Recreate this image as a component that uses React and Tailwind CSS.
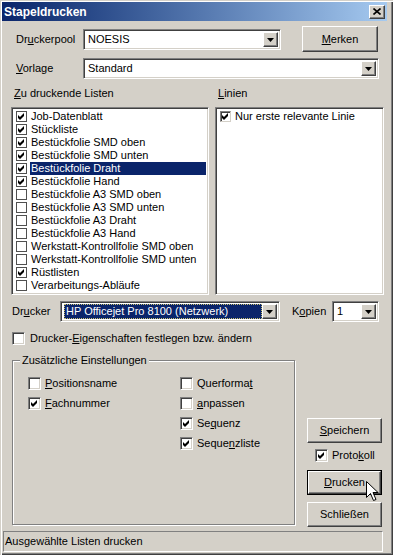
import React from 'react';

// Win2k classic dialog, 3D edges via border + inset shadows
const raised = 'bg-[#d4d0c8] border border-t-white border-l-white border-r-[#404040] border-b-[#404040] shadow-[inset_-1px_-1px_#808080]';
const sunken = 'border border-t-[#808080] border-l-[#808080] border-r-white border-b-white shadow-[inset_1px_1px_#404040,inset_-1px_-1px_#d4d0c8]';

const Tick = ({ className = '' }) => (
  <svg width="7" height="7" viewBox="0 0 7 7" className={className}>
    <path d="M0 2 L2 4 L6 0 L6 3 L2 7 L0 5 Z" fill="#000" />
  </svg>
);

const Arrow = () => (
  <svg width="7" height="4" viewBox="0 0 7 4">
    <path d="M0 0 H7 L3.5 4 Z" fill="#000" />
  </svg>
);

const Check3D = ({ checked }) => (
  <div className={`w-[13px] h-[13px] shrink-0 bg-white flex items-center justify-center ${sunken}`}>
    {checked && <Tick />}
  </div>
);

const ListCheck = ({ checked }) => (
  <div className="w-[11px] h-[11px] shrink-0 bg-white border border-[#505050] flex items-center justify-center">
    {checked && <Tick />}
  </div>
);

const Combo = ({ className = '', children }) => (
  <div className={`h-[21px] bg-white flex p-[2px] ${sunken} ${className}`}>
    <div className="flex-1 flex items-center min-w-0">{children}</div>
    <div className={`w-[15px] shrink-0 flex items-center justify-center ${raised}`}>
      <Arrow />
    </div>
  </div>
);

const Button = ({ className = '', children, isDefault }) => (
  <div className={`h-[25px] w-[75px] ${isDefault ? 'border border-black' : ''} ${className}`}>
    <div className={`w-full h-full flex items-center justify-center ${raised}`}>{children}</div>
  </div>
);

const listen = [
  ['Job-Datenblatt', true],
  ['Stückliste', true],
  ['Bestückfolie SMD oben', true],
  ['Bestückfolie SMD unten', true],
  ['Bestückfolie Draht', true],
  ['Bestückfolie Hand', true],
  ['Bestückfolie A3 SMD oben', false],
  ['Bestückfolie A3 SMD unten', false],
  ['Bestückfolie A3 Draht', false],
  ['Bestückfolie A3 Hand', false],
  ['Werkstatt-Kontrollfolie SMD oben', false],
  ['Werkstatt-Kontrollfolie SMD unten', false],
  ['Rüstlisten', true],
  ['Verarbeitungs-Abläufe', false],
];

const Opt = ({ checked, children }) => (
  <div className="flex items-center h-[13px]">
    <Check3D checked={checked} />
    <span className="ml-[4px] leading-[13px]">{children}</span>
  </div>
);

export default function App() {
  return (
    <div className="relative w-[393px] h-[555px] bg-[#d4d0c8] flex flex-col text-[11px] text-black font-['Liberation_Sans',Arial,sans-serif] overflow-hidden shadow-[inset_1px_1px_#d4d0c8,inset_2px_2px_#fff,inset_-1px_-1px_#404040,inset_-2px_-2px_#808080,inset_-3px_-3px_#d4d0c8]">
      {/* Title bar */}
      <div className="ml-[2px] mt-[2px] w-[385px] h-[19px] shrink-0 flex items-center bg-gradient-to-r from-[#0a246a] to-[#a6caf0]">
        <span className="ml-[2px] text-white font-bold text-[12px]">Stapeldrucken</span>
        <div className={`ml-auto mr-[2px] w-[16px] h-[14px] flex items-center justify-center ${raised}`}>
          <svg width="8" height="7" viewBox="0 0 8 7">
            <path d="M0.5 0.5 L7.5 6.5 M7.5 0.5 L0.5 6.5" stroke="#000" strokeWidth="1.6" />
          </svg>
        </div>
      </div>

      {/* Druckerpool */}
      <div className="flex mt-[5px] h-[26px] shrink-0">
        <span className="ml-[16px] w-[67px] self-center">Dr<u>u</u>ckerpool</span>
        <Combo className="mt-[3px] w-[198px]">
          <span className="ml-[2px]">NOESIS</span>
        </Combo>
        <Button className="ml-[21px] !w-[76px] !h-[26px]"><span><u>M</u>erken</span></Button>
      </div>

      {/* Vorlage */}
      <div className="flex mt-[6px] h-[21px] shrink-0 items-center">
        <span className="ml-[16px] w-[67px]"><u>V</u>orlage</span>
        <Combo className="w-[296px]">
          <span className="ml-[2px]">Standard</span>
        </Combo>
      </div>

      {/* List labels */}
      <div className="flex mt-[7px] h-[14px] shrink-0 items-center">
        <span className="ml-[14px] w-[204px]"><u>Z</u>u druckende Listen</span>
        <span><u>L</u>inien</span>
      </div>

      {/* Lists */}
      <div className="flex mt-[7px] h-[188px] shrink-0">
        <div className={`ml-[11px] w-[198px] bg-white p-[2px] ${sunken}`}>
          {listen.map(([name, checked], i) => (
            <div key={name} className="flex items-center h-[13px]">
              <div className="ml-[2px]"><ListCheck checked={checked} /></div>
              <span
                className={`ml-[3px] pl-[1px] flex-1 leading-[13px] ${i === 4 ? 'bg-[#0a246a] text-white' : ''}`}
              >
                {name}
              </span>
            </div>
          ))}
        </div>
        <div className={`ml-[6px] w-[169px] bg-white p-[2px] ${sunken}`}>
          <div className="flex items-center h-[13px]">
            <div className="ml-[2px] w-[11px] h-[11px] bg-white flex items-center justify-center border border-t-[#808080] border-l-[#808080] border-r-[#d4d0c8] border-b-[#d4d0c8] shadow-[inset_1px_1px_#404040]">
              <Tick />
            </div>
            <span className="ml-[4px] leading-[13px]">Nur erste relevante Linie</span>
          </div>
        </div>
      </div>

      {/* Drucker */}
      <div className="flex mt-[6px] h-[21px] shrink-0 items-center">
        <span className="ml-[12px] w-[48px]">Dr<u>u</u>cker</span>
        <Combo className="w-[220px]">
          <span className="ml-[1px] h-[15px] pl-[1px] pr-[2px] bg-[#0a246a] text-white border border-dotted border-[#c8c070] leading-[13px] flex-1 whitespace-nowrap">
            HP Officejet Pro 8100 (Netzwerk)
          </span>
        </Combo>
        <span className="ml-[12px] w-[40px]">K<u>o</u>pien</span>
        <Combo className="w-[47px]">
          <span className="ml-[2px]">1</span>
        </Combo>
      </div>

      {/* Eigenschaften */}
      <div className="flex mt-[10px] h-[13px] shrink-0 items-center">
        <div className="ml-[12px]"><Check3D /></div>
        <span className="ml-[5px]">Drucker-<u>E</u>igenschaften festlegen bzw. ändern</span>
      </div>

      {/* Group + buttons */}
      <div className="flex mt-[15px] h-[167px] shrink-0">
        <div className="relative ml-[12px] w-[283px] h-[165px] border border-[#808080] shadow-[inset_1px_1px_#fff,1px_1px_#fff] flex">
          <span className="absolute left-[7px] -top-[8px] px-[2px] bg-[#d4d0c8] leading-[14px]">Zusätzliche Einstellungen</span>
          <div className="pl-[15px] pt-[16px] w-[167px] flex flex-col gap-[7px]">
            <Opt><u>P</u>ositionsname</Opt>
            <Opt checked><u>F</u>achnummer</Opt>
          </div>
          <div className="pt-[16px] flex flex-col gap-[7px]">
            <Opt>Querforma<u>t</u></Opt>
            <Opt><u>a</u>npassen</Opt>
            <Opt checked>Se<u>q</u>uenz</Opt>
            <Opt checked>Seque<u>n</u>zliste</Opt>
          </div>
        </div>
        <div className="ml-[12px] w-[75px] pt-[58px] flex flex-col">
          <Button><span><u>S</u>peichern</span></Button>
          <div className="flex items-center mt-[6px] h-[13px] ml-[8px]">
            <Check3D checked />
            <span className="ml-[4px]">Proto<u>k</u>oll</span>
          </div>
          <Button className="mt-[8px]" isDefault><span><u>D</u>rucken</span></Button>
          <Button className="mt-[7px]"><span>Schließen</span></Button>
        </div>
      </div>

      {/* Status bar */}
      <div className="ml-[3px] mt-[4px] w-[380px] h-[21px] shrink-0 flex items-center border border-t-[#808080] border-l-[#808080] border-r-white border-b-white">
        <span className="ml-[1px]">Ausgewählte Listen drucken</span>
      </div>

      {/* mouse pointer */}
      <svg className="absolute left-[366px] top-[481px]" width="13" height="21" viewBox="0 0 13 21">
        <path d="M0.5 0.5 L0.5 16.5 L4.5 12.5 L7.5 19.5 L10 18.5 L7 11.5 L12 11.5 Z" fill="#fff" stroke="#000" strokeWidth="1" />
      </svg>
    </div>
  );
}
